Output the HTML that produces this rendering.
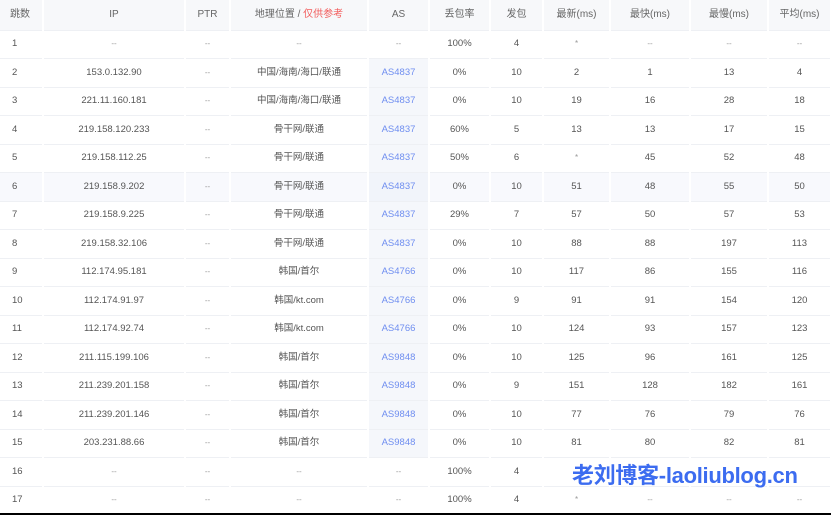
<!DOCTYPE html>
<html><head><meta charset="utf-8"><style>
*{margin:0;padding:0;box-sizing:border-box}
body{width:831px;height:515px;background:#fff;font-family:"Liberation Sans","Noto Sans CJK SC",sans-serif;font-size:9.5px;color:#555;position:relative;overflow:hidden}
table{border-collapse:collapse;table-layout:fixed;width:831px}
td,th{text-align:center;font-weight:normal;height:28.5px;line-height:12px;vertical-align:middle;border-bottom:1px solid #eef0f4;border-right:2px solid #fff;white-space:nowrap;overflow:hidden;padding:0}
th{height:30px;background:#f7f8fa;color:#666;font-size:10px}
td:first-child{text-align:left;padding-left:12px}
th:first-child{text-align:left;padding-left:10px}
td.as{background:#f5f7fb;color:#6f8ef0}
tr.h td{background:#f8f9fd}
tr.h td.as{background:#f1f4fa}
.d{color:#999;font-size:8px}
.red{color:#f25c5c}
.bar{position:absolute;left:0;top:513px;width:831px;height:2px;background:#000}
.wm{position:absolute;left:572px;top:462px;font-size:22px;line-height:28px;font-weight:bold;color:#3c6cf0;letter-spacing:-0.3px;font-family:"Liberation Sans","Noto Sans CJK SC",sans-serif}
</style></head><body>
<table>
<colgroup><col style="width:43px"><col style="width:142px"><col style="width:45px"><col style="width:138px"><col style="width:61px"><col style="width:61px"><col style="width:53px"><col style="width:67px"><col style="width:80px"><col style="width:78px"><col style="width:63px"></colgroup>
<tr><th>跳数</th><th>IP</th><th>PTR</th><th>地理位置 / <span class="red">仅供参考</span></th><th>AS</th><th>丢包率</th><th>发包</th><th>最新(ms)</th><th>最快(ms)</th><th>最慢(ms)</th><th>平均(ms)</th></tr>
<tr><td>1</td><td class="d">--</td><td class="d">--</td><td class="d">--</td><td class="d">--</td><td>100%</td><td>4</td><td class="d">*</td><td class="d">--</td><td class="d">--</td><td class="d">--</td></tr>
<tr><td>2</td><td>153.0.132.90</td><td class="d">--</td><td>中国/海南/海口/联通</td><td class="as">AS4837</td><td>0%</td><td>10</td><td>2</td><td>1</td><td>13</td><td>4</td></tr>
<tr><td>3</td><td>221.11.160.181</td><td class="d">--</td><td>中国/海南/海口/联通</td><td class="as">AS4837</td><td>0%</td><td>10</td><td>19</td><td>16</td><td>28</td><td>18</td></tr>
<tr><td>4</td><td>219.158.120.233</td><td class="d">--</td><td>骨干网/联通</td><td class="as">AS4837</td><td>60%</td><td>5</td><td>13</td><td>13</td><td>17</td><td>15</td></tr>
<tr><td>5</td><td>219.158.112.25</td><td class="d">--</td><td>骨干网/联通</td><td class="as">AS4837</td><td>50%</td><td>6</td><td class="d">*</td><td>45</td><td>52</td><td>48</td></tr>
<tr class="h"><td>6</td><td>219.158.9.202</td><td class="d">--</td><td>骨干网/联通</td><td class="as">AS4837</td><td>0%</td><td>10</td><td>51</td><td>48</td><td>55</td><td>50</td></tr>
<tr><td>7</td><td>219.158.9.225</td><td class="d">--</td><td>骨干网/联通</td><td class="as">AS4837</td><td>29%</td><td>7</td><td>57</td><td>50</td><td>57</td><td>53</td></tr>
<tr><td>8</td><td>219.158.32.106</td><td class="d">--</td><td>骨干网/联通</td><td class="as">AS4837</td><td>0%</td><td>10</td><td>88</td><td>88</td><td>197</td><td>113</td></tr>
<tr><td>9</td><td>112.174.95.181</td><td class="d">--</td><td>韩国/首尔</td><td class="as">AS4766</td><td>0%</td><td>10</td><td>117</td><td>86</td><td>155</td><td>116</td></tr>
<tr><td>10</td><td>112.174.91.97</td><td class="d">--</td><td>韩国/kt.com</td><td class="as">AS4766</td><td>0%</td><td>9</td><td>91</td><td>91</td><td>154</td><td>120</td></tr>
<tr><td>11</td><td>112.174.92.74</td><td class="d">--</td><td>韩国/kt.com</td><td class="as">AS4766</td><td>0%</td><td>10</td><td>124</td><td>93</td><td>157</td><td>123</td></tr>
<tr><td>12</td><td>211.115.199.106</td><td class="d">--</td><td>韩国/首尔</td><td class="as">AS9848</td><td>0%</td><td>10</td><td>125</td><td>96</td><td>161</td><td>125</td></tr>
<tr><td>13</td><td>211.239.201.158</td><td class="d">--</td><td>韩国/首尔</td><td class="as">AS9848</td><td>0%</td><td>9</td><td>151</td><td>128</td><td>182</td><td>161</td></tr>
<tr><td>14</td><td>211.239.201.146</td><td class="d">--</td><td>韩国/首尔</td><td class="as">AS9848</td><td>0%</td><td>10</td><td>77</td><td>76</td><td>79</td><td>76</td></tr>
<tr><td>15</td><td>203.231.88.66</td><td class="d">--</td><td>韩国/首尔</td><td class="as">AS9848</td><td>0%</td><td>10</td><td>81</td><td>80</td><td>82</td><td>81</td></tr>
<tr><td>16</td><td class="d">--</td><td class="d">--</td><td class="d">--</td><td class="d">--</td><td>100%</td><td>4</td><td class="d"></td><td class="d"></td><td class="d"></td><td class="d"></td></tr>
<tr><td>17</td><td class="d">--</td><td class="d">--</td><td class="d">--</td><td class="d">--</td><td>100%</td><td>4</td><td class="d">*</td><td class="d">--</td><td class="d">--</td><td class="d">--</td></tr>
</table>
<div class="wm">老刘博客-laoliublog.cn</div>
<div class="bar"></div>
</body></html>
